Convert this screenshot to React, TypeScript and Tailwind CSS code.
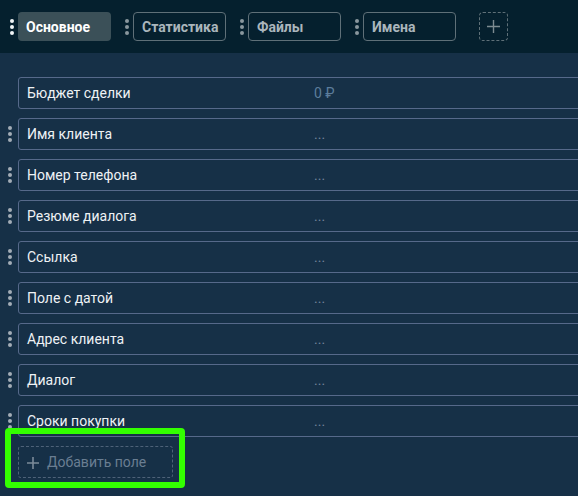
import React from "react";

const Dots = ({ color }: { color: string }) => (
  <div className="flex flex-col gap-[2px] w-[4px]">
    <span className={`block w-[4px] h-[4px] rounded-full ${color}`} />
    <span className={`block w-[4px] h-[4px] rounded-full ${color}`} />
    <span className={`block w-[4px] h-[4px] rounded-full ${color}`} />
  </div>
);

const rows: { label: string; value: string; handle: boolean }[] = [
  { label: "Бюджет сделки", value: "0 ₽", handle: false },
  { label: "Имя клиента", value: "...", handle: true },
  { label: "Номер телефона", value: "...", handle: true },
  { label: "Резюме диалога", value: "...", handle: true },
  { label: "Ссылка", value: "...", handle: true },
  { label: "Поле с датой", value: "...", handle: true },
  { label: "Адрес клиента", value: "...", handle: true },
  { label: "Диалог", value: "...", handle: true },
  { label: "Сроки покупки", value: "...", handle: true },
];

const tabs = ["Статистика", "Файлы", "Имена"];

export default function App() {
  return (
    <div
      className="w-[578px] h-[496px] overflow-hidden bg-[#163047] relative"
      style={{ fontFamily: "Roboto, 'Noto Sans', sans-serif" }}
    >
      {/* header */}
      <div className="h-[53px] bg-[#05202e] flex items-start pt-[12px] pl-[10px]">
        <div className="flex items-center gap-[4px]">
          <Dots color="bg-[#f0f4f6]" />
          <div className="w-[93px] h-[29px] rounded-[4px] bg-[#3b5058] flex items-center pl-[8px] pt-[1px] text-[14px] font-bold text-white">
            Основное
          </div>
        </div>
        {tabs.map((t) => (
          <div key={t} className="flex items-center gap-[4px] ml-[14px]">
            <Dots color="bg-[#8a979d]" />
            <div className="w-[93px] h-[29px] rounded-[4px] border border-[#5f7078] flex items-center pl-[8px] pt-[1px] text-[14px] font-bold text-[#aab6bc]">
              {t}
            </div>
          </div>
        ))}
        <div className="ml-[23px] w-[29px] h-[29px] rounded-[4px] border border-dashed border-[#5f7078] flex items-center justify-center">
          <svg width="15" height="15" viewBox="0 0 15 15">
            <path d="M7.5 1v13M1 7.5h13" stroke="#7d8b91" strokeWidth="1.4" />
          </svg>
        </div>
      </div>

      {/* body */}
      <div className="pt-[24px] flex flex-col gap-[9px]">
        {rows.map((r) => (
          <div key={r.label} className="flex items-center">
            <div className="w-[18px] flex justify-end pr-[6px]">
              {r.handle && <Dots color="bg-[#a3adb6]" />}
            </div>
            <div className="flex-1 mr-[-6px] h-[32px] rounded-[3px] border border-[#56698a] flex items-center pt-[1px]">
              <div className="w-[295px] pl-[8px] text-[14px] text-[#eef2f5]">{r.label}</div>
              <div className={`text-[14px] ${r.value === "..." ? "text-[#74849a]" : "text-[#5d7d9c]"}`}>
                {r.value}
              </div>
            </div>
          </div>
        ))}
        <div className="ml-[18px] w-[155px] h-[32px] rounded-[3px] border border-dashed border-[#4e6278] flex items-center pl-[7px] gap-[7px] pt-[1px] text-[14px] text-[#6a7e92]">
          <svg width="14" height="14" viewBox="0 0 14 14">
            <path d="M7 1v12M1 7h12" stroke="#7b8a99" strokeWidth="1.6" />
          </svg>
          <span>Добавить поле</span>
        </div>
      </div>

      {/* highlight */}
      <div className="absolute left-[5px] top-[428px] w-[180px] h-[60px] border-[6px] border-[#33ff00] rounded-[4px] pointer-events-none" />
    </div>
  );
}
